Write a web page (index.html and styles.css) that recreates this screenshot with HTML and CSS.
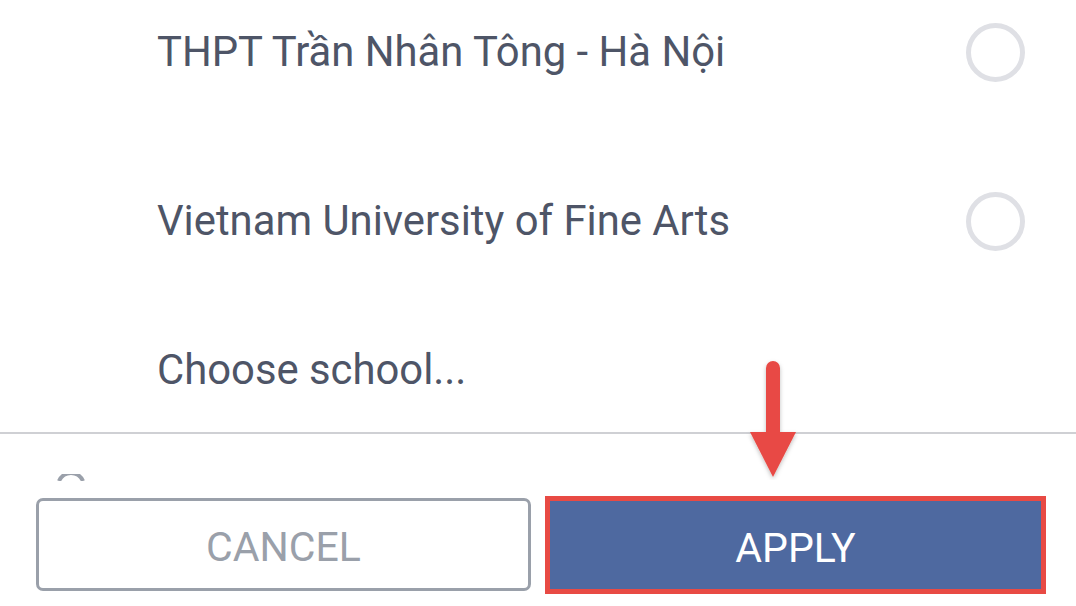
FILE: index.html
```html
<!DOCTYPE html>
<html lang="vi">
<head>
<meta charset="utf-8">
<title>Choose school</title>
<link rel="stylesheet" href="styles.css">
</head>
<body>
<div class="screen">
  <div class="list-area">
    <ul class="list">
      <li class="row">
        <span class="label">THPT Trần Nhân Tông - Hà Nội</span>
        <span class="radio"></span>
      </li>
      <li class="row">
        <span class="label">Vietnam University of Fine Arts</span>
        <span class="radio"></span>
      </li>
      <li class="row row-last">
        <span class="label">Choose school...</span>
      </li>
    </ul>
  </div>
  <div class="footer">
    <svg class="peek" width="30" height="7" viewBox="0 0 30 7">
      <path d="M3 7 A13 13 0 0 1 27 7" fill="none" stroke="#9aa0aa" stroke-width="4"/>
    </svg>
    <div class="actions">
      <button class="btn btn-cancel">CANCEL</button>
      <button class="btn btn-apply">APPLY</button>
    </div>
  </div>
  <svg class="arrow" width="60" height="125" viewBox="0 0 60 125">
    <defs>
      <filter id="sh" x="-30%" y="-10%" width="160%" height="130%">
        <feDropShadow dx="0" dy="2" stdDeviation="2" flood-color="#000" flood-opacity="0.25"/>
      </filter>
    </defs>
    <g filter="url(#sh)" fill="#e84a44">
      <rect x="22" y="6" width="14" height="80" rx="7"/>
      <polygon points="6,77 52,77 29,122"/>
    </g>
  </svg>
</div>
</body>
</html>
```

FILE: styles.css
```css
* {
  box-sizing: border-box;
}

html, body {
  margin: 0;
  padding: 0;
  background: #ffffff;
}

body {
  font-family: Roboto, "Noto Sans", "Liberation Sans", sans-serif;
}

.screen {
  position: relative;
  width: 1076px;
  height: 606px;
  overflow: hidden;
  background: #ffffff;
  display: flex;
  flex-direction: column;
}

.list-area {
  height: 432px;
  overflow: hidden;
  flex: none;
}

.list {
  list-style: none;
  margin: -32px 0 0 0;
  padding: 0;
}

.row {
  height: 168px;
  display: flex;
  align-items: center;
  justify-content: space-between;
  padding: 0 51px 0 157px;
}

.row:nth-child(2) {
  padding-top: 2px;
}

.row-last {
  height: 132px;
}

.label {
  font-size: 41.8px;
  color: #4e5567;
  line-height: 1.2;
}

.radio {
  width: 59px;
  height: 59px;
  border-radius: 50%;
  border: 5px solid #dfe0e5;
  flex: none;
}

.footer {
  flex: 1;
  border-top: 2px solid #cfd0d4;
  padding-top: 40px;
}

.peek {
  display: block;
  margin-left: 56px;
}

.actions {
  display: flex;
  align-items: flex-start;
  margin-top: 15px;
  padding-left: 36px;
}

.btn {
  font-family: Roboto, "Noto Sans", "Liberation Sans", sans-serif;
  font-size: 41px;
  padding: 5px 0 0 0;
  display: flex;
  align-items: center;
  justify-content: center;
}

.btn-cancel {
  width: 495px;
  height: 93px;
  margin-top: 2px;
  background: #ffffff;
  color: #9aa0aa;
  border: 3px solid #9aa0aa;
  border-radius: 7px;
}

.btn-apply {
  width: 501px;
  height: 98px;
  margin-left: 14px;
  background: #4e69a0;
  color: #ffffff;
  border: 5px solid #e84a44;
  border-radius: 0;
}

.arrow {
  position: absolute;
  left: 744px;
  top: 355px;
}
```
